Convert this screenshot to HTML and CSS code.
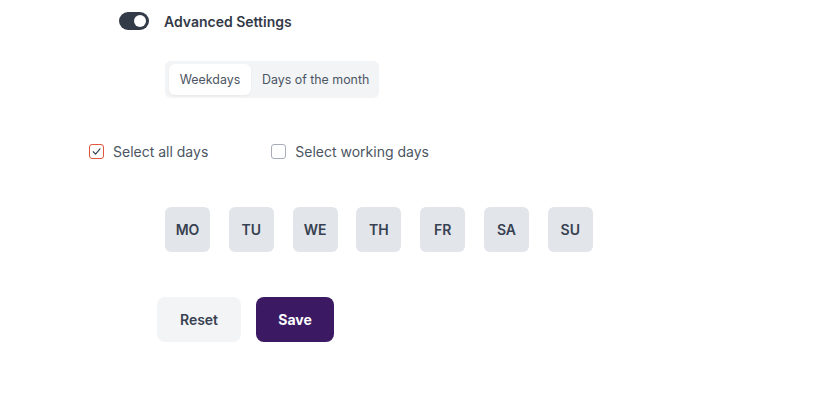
FILE: index.html
```html
<!DOCTYPE html>
<html>
<head>
<meta charset="utf-8">
<link rel="stylesheet" href="styles.css">
</head>
<body>
<div class="page">
  <div class="toggle-row">
    <span class="toggle"><span class="knob"></span></span>
    <span class="toggle-label">Advanced Settings</span>
  </div>
  <div class="tabs">
    <span class="tab active">Weekdays</span>
    <span class="tab">Days of the month</span>
  </div>
  <div class="checks">
    <label class="check"><span class="box checked"><svg width="11" height="11" viewBox="0 0 12 12"><path d="M2.5 6.3 L5 8.8 L9.8 3.2" fill="none" stroke="#374151" stroke-width="1.3" stroke-linecap="round" stroke-linejoin="round"/></svg></span>Select all days</label>
    <label class="check"><span class="box"></span>Select working days</label>
  </div>
  <div class="days">
    <span class="day">MO</span>
    <span class="day">TU</span>
    <span class="day">WE</span>
    <span class="day">TH</span>
    <span class="day">FR</span>
    <span class="day">SA</span>
    <span class="day">SU</span>
  </div>
  <div class="actions">
    <button class="btn reset">Reset</button>
    <button class="btn save">Save</button>
  </div>
</div>
</body>
</html>
```
FILE: styles.css
```css
html, body {
  margin: 0;
  padding: 0;
  background: #ffffff;
}
body {
  font-family: Inter, "Noto Sans", sans-serif;
  color: #374151;
}
.page {
  padding-top: 12px;
}
.toggle-row {
  display: flex;
  align-items: center;
  margin-left: 119px;
  height: 18px;
}
.toggle {
  width: 30px;
  height: 18px;
  border-radius: 9px;
  background: #333a48;
  display: flex;
  align-items: center;
  justify-content: flex-end;
  padding: 0 3px;
  box-sizing: border-box;
}
.knob {
  width: 12px;
  height: 12px;
  border-radius: 50%;
  background: #ffffff;
}
.toggle-label {
  margin-left: 15px;
  font-size: 14px;
  font-weight: 600;
  color: #333a48;
}
.tabs {
  display: flex;
  width: fit-content;
  margin-left: 165px;
  margin-top: 31px;
  padding: 3px 4px;
  background: #f3f4f6;
  border-radius: 6px;
  height: 37px;
  box-sizing: border-box;
  align-items: stretch;
}
.tab {
  font-size: 12.4px;
  color: #4b5563;
  display: flex;
  align-items: center;
  padding: 0 6px 0 11px;
  border-radius: 6px;
  white-space: nowrap;
}
.tab.active {
  background: #ffffff;
  width: 82px;
  padding: 0;
  box-sizing: border-box;
  justify-content: center;
  box-shadow: 0 1px 2px rgba(0,0,0,0.05);
}
.checks {
  display: flex;
  margin-left: 89px;
  margin-top: 45px;
  gap: 63px;
  height: 17px;
  align-items: center;
}
.check {
  display: flex;
  align-items: center;
  font-size: 14px;
  color: #4b5563;
}
.box {
  width: 15px;
  height: 15px;
  border: 1px solid #a9adbb;
  border-radius: 3px;
  box-sizing: border-box;
  margin-right: 9px;
  display: flex;
  align-items: center;
  justify-content: center;
}
.box.checked {
  border-color: #e0573d;
}
.days {
  display: flex;
  gap: 18.8px;
  margin-left: 165px;
  margin-top: 47px;
}
.day {
  width: 45px;
  height: 45px;
  border-radius: 6px;
  background: #e2e5e9;
  display: flex;
  align-items: center;
  justify-content: center;
  font-size: 14px;
  font-weight: 600;
  color: #374151;
}
.actions {
  display: flex;
  gap: 15px;
  margin-left: 157px;
  margin-top: 45px;
}
.btn {
  height: 45px;
  border: none;
  border-radius: 8px;
  font-family: Inter, "Noto Sans", sans-serif;
  font-size: 14px;
  font-weight: 600;
  padding: 0;
}
.reset {
  width: 84px;
  background: #f3f4f6;
  color: #374151;
}
.save {
  width: 78px;
  background: #3b1a63;
  color: #ffffff;
  font-weight: 700;
}
```
